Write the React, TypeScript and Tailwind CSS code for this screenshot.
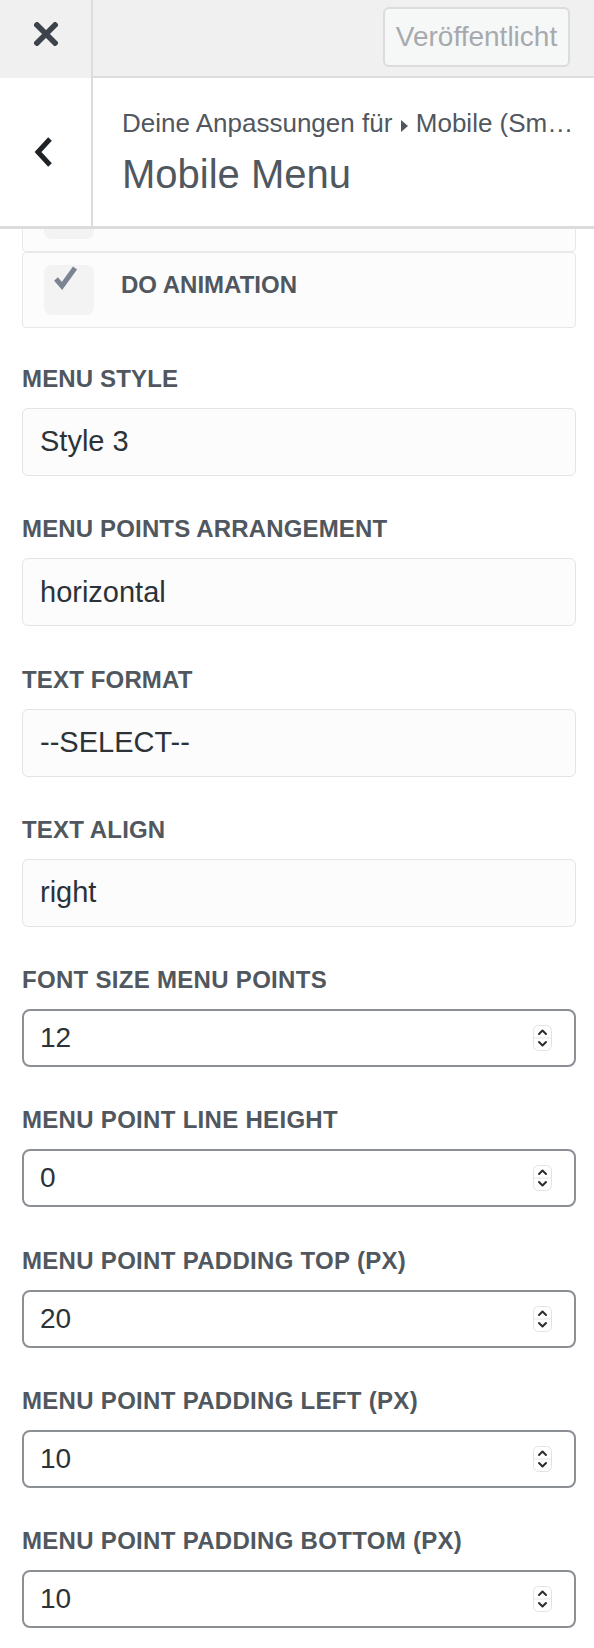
import React from 'react';

const selects = [
  { label: 'MENU STYLE', value: 'Style 3' },
  { label: 'MENU POINTS ARRANGEMENT', value: 'horizontal' },
  { label: 'TEXT FORMAT', value: '--SELECT--' },
  { label: 'TEXT ALIGN', value: 'right' },
];

const numbers = [
  { label: 'FONT SIZE MENU POINTS', value: '12' },
  { label: 'MENU POINT LINE HEIGHT', value: '0' },
  { label: 'MENU POINT PADDING TOP (PX)', value: '20' },
  { label: 'MENU POINT PADDING LEFT (PX)', value: '10' },
  { label: 'MENU POINT PADDING BOTTOM (PX)', value: '10' },
];

function Spinner() {
  return (
    <svg width="19" height="26" viewBox="0 0 19 26" className="shrink-0">
      <rect x="0.5" y="0.5" width="18" height="25" rx="5" fill="#ffffff" stroke="#e2e2e2" />
      <line x1="1" y1="13" x2="18" y2="13" stroke="#e6e6e6" strokeWidth="1" />
      <polyline points="6,9 9.5,5.5 13,9" fill="none" stroke="#2c2c2c" strokeWidth="2" strokeLinecap="round" strokeLinejoin="round" />
      <polyline points="6,17 9.5,20.5 13,17" fill="none" stroke="#2c2c2c" strokeWidth="2" strokeLinecap="round" strokeLinejoin="round" />
    </svg>
  );
}

function CheckRow({ label, className }: { label?: string; className?: string }) {
  return (
    <div className={`flex items-center h-[76px] border border-[#e8e8e8] rounded-[4px] bg-[#fcfcfc] pl-[21px] ${className ?? ''}`}>
      <div className="relative w-[50px] h-[50px] rounded-[8px] bg-[#f3f3f4] shrink-0">
        <svg width="40" height="30" viewBox="0 0 40 30" className="absolute left-0 top-0">
          <polyline points="12,14 18,21 31,3" fill="none" stroke="#7b8490" strokeWidth="5" strokeLinejoin="miter" />
        </svg>
      </div>
      {label && (
        <span className="ml-[27px] -mt-[10px] text-[24px] leading-[30px] font-bold text-[#50575e]">{label}</span>
      )}
    </div>
  );
}

export default function App() {
  return (
    <div className="w-[594px] h-[1648px] bg-white overflow-hidden font-['Liberation_Sans',Arial,sans-serif]">
      {/* top bar */}
      <div className="flex h-[78px] bg-[#f0f0f1]">
        <button className="w-[93px] h-[78px] border-r-[2px] border-[#dcdcde] flex items-center justify-center pb-[10px] pl-[1px]">
          <svg width="24" height="24" viewBox="0 0 24 24">
            <path d="M3 3 L21 21 M21 3 L3 21" stroke="#3c434a" strokeWidth="5.5" strokeLinecap="square" />
          </svg>
        </button>
        <div className="flex-1 flex justify-end items-start pt-[7px] pr-[24px] border-b-[2px] border-[#dcdcde]">
          <button className="w-[187px] h-[60px] rounded-[6px] border-[2px] border-[#dcdcde] bg-[#f6f7f7] text-[28px] text-[#a7aaad] flex items-center justify-center">
            Veröffentlicht
          </button>
        </div>
      </div>

      {/* section header */}
      <div className="flex h-[148px] bg-white">
        <button className="w-[93px] border-r-[2px] border-[#dcdcde] flex items-center justify-center pr-[3px]">
          <svg width="20" height="30" viewBox="0 0 20 30">
            <polyline points="16,2 4,15 16,28" fill="none" stroke="#1d2327" strokeWidth="5" />
          </svg>
        </button>
        <div className="flex-1 min-w-0 pl-[29px] pr-[10px] pt-[29px]">
          <div className="truncate text-[26px] leading-[32px] text-[#50575e]">
            Deine Anpassungen für{' '}
            <svg width="9" height="14" viewBox="0 0 9 14" className="inline-block align-[-1px]">
              <path d="M1 1 L8 7 L1 13 Z" fill="#50575e" />
            </svg>{' '}
            Mobile (Smartphone)
          </div>
          <h3 className="mt-[11px] text-[40px] leading-[48px] text-[#50575e]">Mobile Menu</h3>
        </div>
      </div>
      <div className="h-[3px] bg-[#dcdcde]" />

      {/* controls */}
      <div className="h-[1419px] overflow-hidden pl-[22px] pr-[18px]">
        <CheckRow className="-mt-[53px]" />
        <CheckRow label="DO ANIMATION" />

        <div className="flex flex-col gap-[38.3px] mt-[36px]">
          {selects.map((s) => (
            <div key={s.label} className="flex flex-col">
              <span className="text-[24px] leading-[30px] font-bold tracking-[0.15px] text-[#50575e]">{s.label}</span>
              <div className="mt-[14px] h-[68px] rounded-[6px] border border-[#e4e4e4] bg-[#fcfcfc] flex items-center pl-[17px] text-[29px] text-[#2c3338]">
                {s.value}
              </div>
            </div>
          ))}
          {numbers.map((n) => (
            <div key={n.label} className="flex flex-col">
              <span className="text-[24px] leading-[30px] font-bold tracking-[0.3px] text-[#50575e]">{n.label}</span>
              <div className="mt-[14px] h-[58px] rounded-[8px] border-[2px] border-[#8c8f94] bg-white flex items-center justify-between pl-[16px] pr-[22px] text-[28px] text-[#2c3338]">
                <span>{n.value}</span>
                <Spinner />
              </div>
            </div>
          ))}
        </div>
      </div>
    </div>
  );
}
